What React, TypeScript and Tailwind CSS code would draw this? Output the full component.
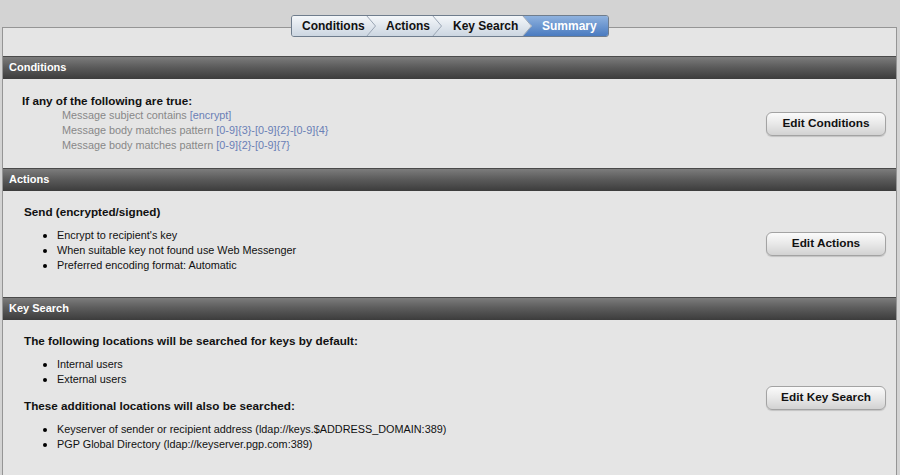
import React from "react";

const font = { fontFamily: '"Liberation Sans", Arial, sans-serif' };

function Chevron({ from, to }: { from: [string, string]; to: [string, string] }) {
  const id = `g${from[0].slice(1)}${to[0].slice(1)}`;
  return (
    <svg width="10" height="20" viewBox="0 0 10 20" className="block shrink-0">
      <defs>
        <linearGradient id={id + "a"} x1="0" y1="0" x2="0" y2="1">
          <stop offset="0" stopColor={from[0]} />
          <stop offset="1" stopColor={from[1]} />
        </linearGradient>
        <linearGradient id={id + "b"} x1="0" y1="0" x2="0" y2="1">
          <stop offset="0" stopColor={to[0]} />
          <stop offset="1" stopColor={to[1]} />
        </linearGradient>
      </defs>
      <rect x="0" y="0" width="10" height="20" fill={`url(#${id}b)`} />
      <polygon points="0,0 1,0 10,10 1,20 0,20" fill={`url(#${id}a)`} />
      <polyline points="0.5,-0.5 9.5,10 0.5,20.5" fill="none" stroke="#9aa6b4" strokeWidth="1" />
    </svg>
  );
}

const light: [string, string] = ["#f4f7fa", "#ccd6e1"];
const blue: [string, string] = ["#8fb2de", "#4a7bc0"];

function Breadcrumb() {
  return (
    <div className="flex h-[22px] overflow-hidden rounded-[3px] border border-[#6f7d8d] text-[12px] font-bold leading-[20px]">
      <div className="flex w-[74px] bg-[linear-gradient(#f4f7fa,#ccd6e1)] pl-[10px] text-[#111]">Conditions</div>
      <Chevron from={light} to={light} />
      <div className="flex w-[56px] bg-[linear-gradient(#f4f7fa,#ccd6e1)] pl-[10px] text-[#111]">Actions</div>
      <Chevron from={light} to={light} />
      <div className="flex w-[80px] bg-[linear-gradient(#f4f7fa,#ccd6e1)] pl-[11px] text-[#111]">Key Search</div>
      <Chevron from={light} to={blue} />
      <div className="flex w-[76px] bg-[linear-gradient(#8fb2de,#4a7bc0)] pl-[10px] text-white">Summary</div>
    </div>
  );
}

function Header({ title }: { title: string }) {
  return (
    <div className="h-[23px] border-t border-[#4a4a4a] bg-[linear-gradient(#7c7c7c,#5c5c5c_45%,#3c3c3c)] pl-[6px] text-[11px] font-bold leading-[21px] text-white">
      {title}
    </div>
  );
}

function EditButton({ label }: { label: string }) {
  return (
    <button className="mr-[10px] h-[24px] w-[120px] shrink-0 rounded-[6px] border border-[#a3a3a3] bg-[linear-gradient(#fbfbfb,#e8e8e8_50%,#d2d2d2)] text-[11.8px] font-bold text-[#111] shadow-[0_1px_1px_rgba(0,0,0,0.15)]">
      {label}
    </button>
  );
}

function Bullet({ children }: { children: React.ReactNode }) {
  return (
    <li className="flex h-[15px] items-center text-[10.85px] text-[#111]">
      <span className="ml-[19px] mr-[10px] h-[4px] w-[4px] rounded-full bg-black" />
      {children}
    </li>
  );
}

const link = "text-[#6a80b6]";
const heading = "text-[11.7px] font-bold leading-[15px] text-[#111]";

export default function App() {
  return (
    <div style={font} className="min-h-[475px] bg-[#d3d3d3] pt-[27px]">
      <div className="relative ml-[2px] w-[895px] border border-[#959595] bg-[#e5e5e5]">
        <div className="absolute left-[288px] top-[-13px]">
          <Breadcrumb />
        </div>
        <div className="h-[28px]" />

        <Header title="Conditions" />
        <div className="flex items-center justify-between">
          <div className="pb-[15px] pl-[19px] pt-[14px]">
            <div className={heading}>If any of the following are true:</div>
            <div className="pl-[40px] text-[10.85px] leading-[15px] text-[#888]">
              <div>
                Message subject contains <span className={link}>[encrypt]</span>
              </div>
              <div>
                Message body matches pattern <span className={link}>[0-9]{"{3}"}-[0-9]{"{2}"}-[0-9]{"{4}"}</span>
              </div>
              <div>
                Message body matches pattern <span className={link}>[0-9]{"{2}"}-[0-9]{"{7}"}</span>
              </div>
            </div>
          </div>
          <EditButton label="Edit Conditions" />
        </div>

        <Header title="Actions" />
        <div className="flex items-center justify-between">
          <div className="pb-[24px] pl-[21px] pt-[13px]">
            <div className={heading}>Send (encrypted/signed)</div>
            <ul className="mt-[9px]">
              <Bullet>Encrypt to recipient's key</Bullet>
              <Bullet>When suitable key not found use Web Messenger</Bullet>
              <Bullet>Preferred encoding format: Automatic</Bullet>
            </ul>
          </div>
          <EditButton label="Edit Actions" />
        </div>

        <Header title="Key Search" />
        <div className="flex items-center justify-between">
          <div className="pb-[23px] pl-[21px] pt-[13px]">
            <div className={heading}>The following locations will be searched for keys by default:</div>
            <ul className="mt-[9px]">
              <Bullet>Internal users</Bullet>
              <Bullet>External users</Bullet>
            </ul>
            <div className={"mt-[11px] " + heading}>These additional locations will also be searched:</div>
            <ul className="mt-[9px]">
              <Bullet>Keyserver of sender or recipient address (ldap://keys.$ADDRESS_DOMAIN:389)</Bullet>
              <Bullet>PGP Global Directory (ldap://keyserver.pgp.com:389)</Bullet>
            </ul>
          </div>
          <EditButton label="Edit Key Search" />
        </div>
      </div>
    </div>
  );
}
